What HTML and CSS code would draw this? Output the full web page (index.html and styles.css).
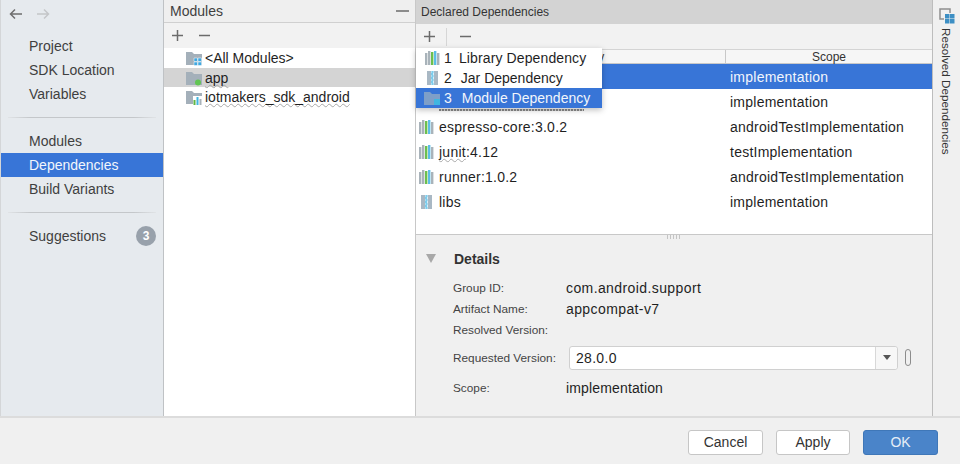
FILE: index.html
```html
<!DOCTYPE html>
<html lang="en">
<head>
<meta charset="utf-8">
<title>Project Structure</title>
<link rel="stylesheet" href="styles.css">
</head>
<body>
<svg class="defs" width="0" height="0" aria-hidden="true">
  <symbol id="folder" viewBox="0 0 16 16"><path d="M0 2h6l2 2h8v11H0z" fill="#a4b0ba"/></symbol>
  <symbol id="lib" viewBox="0 0 16 16">
    <rect x="1" y="3" width="2.400" height="12" fill="#a9b3ba"/><rect x="4" y="1" width="2.400" height="14" fill="#a9b3ba"/>
    <rect x="7" y="2" width="2.400" height="13" fill="#6cbf4e"/><rect x="10" y="1" width="2.400" height="14" fill="#5cbde6"/>
    <rect x="13" y="3" width="2.400" height="12" fill="#a9b3ba"/>
  </symbol>
  <symbol id="jar" viewBox="0 0 16 16">
    <rect x="3" y="1" width="11" height="14" fill="#a9b8c4"/>
    <rect x="7" y="1" width="3" height="14" fill="#d6eef9"/>
    <path d="M7.500 1h2v2h-2zM7 3h2v2H7zM7.500 5h2v2h-2zM7 7h2v2H7zM7.500 9h2v2h-2zM7 11h2v2H7zM7.500 13h2v2h-2z" fill="#7cccec"/>
  </symbol>
</svg>
<div class="window">
  <div class="main">
    <nav class="sidebar">
      <div class="history">
        <svg class="arrow" width="14" height="12" viewBox="0 0 14 12"><path d="M13 6H2M6 1.500L1.500 6L6 10.500" fill="none" stroke="#6e6e6e" stroke-width="1.500"/></svg>
        <svg class="arrow" width="14" height="12" viewBox="0 0 14 12"><path d="M1 6h11M8 1.500L12.500 6L8 10.500" fill="none" stroke="#c4c6c8" stroke-width="1.500"/></svg>
      </div>
      <div class="nav-group">
        <div class="nav-item">Project</div>
        <div class="nav-item">SDK Location</div>
        <div class="nav-item">Variables</div>
      </div>
      <div class="nav-sep"></div>
      <div class="nav-group">
        <div class="nav-item">Modules</div>
        <div class="nav-item active">Dependencies</div>
        <div class="nav-item">Build Variants</div>
      </div>
      <div class="nav-sep"></div>
      <div class="nav-group">
        <div class="nav-item suggestions">Suggestions<span class="badge">3</span></div>
      </div>
    </nav>

    <section class="modules">
      <header class="modules-head"><span>Modules</span><span class="dash"></span></header>
      <div class="toolbar modules-bar">
        <svg class="tool" width="13" height="13" viewBox="0 0 13 13"><path d="M6.500 1v11M1 6.500h11" stroke="#6b6b6b" stroke-width="1.500"/></svg>
        <svg class="tool" width="13" height="13" viewBox="0 0 13 13"><path d="M1 6.500h11" stroke="#6b6b6b" stroke-width="1.500"/></svg>
      </div>
      <div class="module-list">
        <div class="module">
          <svg class="ico" width="16" height="16" viewBox="0 0 16 16"><use href="#folder"/><path d="M8 8h3.500v3.500H8zM12 8h3.500v3.500H12zM8 12h3.500v3.500H8zM12 12h3.500v3.500H12z" fill="#40a8e0" stroke="#fff" stroke-width=".5"/></svg>
          <span>&lt;All Modules&gt;</span>
        </div>
        <div class="module selected">
          <svg class="ico" width="16" height="16" viewBox="0 0 16 16"><use href="#folder"/><circle cx="12" cy="12.500" r="3" fill="#62c554"/></svg>
          <span class="wavy">app</span>
        </div>
        <div class="module">
          <svg class="ico" width="16" height="16" viewBox="0 0 16 16"><use href="#folder"/><rect x="7" y="7" width="9" height="9" fill="#fff"/><rect x="7.500" y="11" width="2" height="5" fill="#62b543"/><rect x="10.500" y="8" width="2" height="8" fill="#40b6e0"/><rect x="13.500" y="10" width="2" height="6" fill="#a9b3ba"/></svg>
          <span class="wavy">iotmakers_sdk_android</span>
        </div>
      </div>
    </section>

    <section class="declared">
      <header class="declared-head">Declared Dependencies</header>
      <div class="toolbar declared-bar">
        <svg class="tool" width="13" height="13" viewBox="0 0 13 13"><path d="M6.500 1v11M1 6.500h11" stroke="#6b6b6b" stroke-width="1.500"/></svg>
        <span class="tool-sep"></span>
        <svg class="tool" width="13" height="13" viewBox="0 0 13 13"><path d="M1 6.500h11" stroke="#6b6b6b" stroke-width="1.500"/></svg>
      </div>
      <div class="table">
        <div class="row head"><div>Dependency</div><div>Scope</div></div>
        <div class="row selected-row"><div class="name"></div><div class="scope">implementation</div></div>
        <div class="row"><div class="name covered"><span class="squiggle"></span></div><div class="scope">implementation</div></div>
        <div class="row"><div class="name"><svg class="ico" width="16" height="16"><use href="#lib"/></svg><span>espresso-core:3.0.2</span></div><div class="scope">androidTestImplementation</div></div>
        <div class="row"><div class="name"><svg class="ico" width="16" height="16"><use href="#lib"/></svg><span><span class="wavy">junit</span>:4.12</span></div><div class="scope">testImplementation</div></div>
        <div class="row"><div class="name"><svg class="ico" width="16" height="16"><use href="#lib"/></svg><span>runner:1.0.2</span></div><div class="scope">androidTestImplementation</div></div>
        <div class="row"><div class="name"><svg class="ico" width="16" height="16"><use href="#jar"/></svg><span>libs</span></div><div class="scope">implementation</div></div>
      </div>
      <div class="details">
        <div class="grip"></div>
        <div class="details-title"><span class="triangle"></span><strong>Details</strong></div>
        <div class="field f-group"><label>Group ID:</label><span class="wide">com.android.support</span></div>
        <div class="field f-artifact"><label>Artifact Name:</label><span class="wide">appcompat-v7</span></div>
        <div class="field f-resolved"><label>Resolved Version:</label></div>
        <div class="field f-requested">
          <label>Requested Version:</label>
          <div class="combo"><span class="combo-value">28.0.0</span><span class="combo-arrow"><i></i></span></div>
          <span class="pill"></span>
        </div>
        <div class="field f-scope"><label>Scope:</label><span class="scope-value">implementation</span></div>
      </div>
      <div class="popup">
        <div class="popup-item n-lib"><svg class="ico" width="16" height="16"><use href="#lib"/></svg><span class="num n1">1</span>Library Dependency</div>
        <div class="popup-item"><svg class="ico" width="16" height="16"><use href="#jar"/></svg><span class="num">2</span>Jar Dependency</div>
        <div class="popup-item current"><svg class="ico" width="16" height="16" viewBox="0 0 16 16"><path d="M0 2h6l2 2h8v11H0z" fill="#7e9fc8"/><rect x="10" y="9" width="6" height="6" fill="#40b6e0"/></svg><span class="num n3">3</span>Module Dependency</div>
      </div>
    </section>

    <aside class="strip">
      <svg width="16" height="16" viewBox="0 0 16 16"><path d="M1 1h10v10H1z" fill="none" stroke="#8f8f8f" stroke-width="1.500"/><rect x="5" y="5" width="11" height="11" fill="#f0f0f0"/><path d="M6 6h4.500v4.500H6zM11 6h4.500v4.500H11zM6 11h4.500v4.500H6zM11 11h4.500v4.500H11z" fill="#3d8fc4"/></svg>
      <span class="strip-label">Resolved Dependencies</span>
    </aside>
  </div>
  <footer class="footer">
    <button class="btn">Cancel</button>
    <button class="btn apply">Apply</button>
    <button class="btn primary">OK</button>
  </footer>
</div>
</body>
</html>
```
FILE: styles.css
```css
* { box-sizing: border-box; }
html, body { margin: 0; height: 100%; overflow: hidden; }
body { font-family: "Liberation Sans", Arial, sans-serif; font-size: 14px; color: #1f1f1f; background: #f0f0f0; }
.defs { position: absolute; }
.window { width: 960px; height: 464px; display: flex; flex-direction: column; }
.main { height: 416px; display: flex; }
.ico { flex: none; }
.wavy { text-decoration: underline wavy #a8a8a8 1px; text-underline-offset: 1px; text-decoration-skip-ink: none; }

.sidebar { width: 164px; flex: none; background: #e6eaee; border-right: 1px solid #bfc2c5; border-left: 1px solid #d4d6d8; color: #3f3f3f; }
.history { height: 34px; display: flex; align-items: center; gap: 13px; padding: 0 0 6px 8px; }
.nav-group { display: flex; flex-direction: column; }
.nav-item { height: 24px; line-height: 24px; padding-left: 28px; }
.nav-item.active { background: #3875d7; color: #f2f6fc; }
.nav-sep { height: 1px; margin: 11px 7px 11px 7px; background: linear-gradient(90deg, #e0e3e6, #c4c7ca 15%, #c4c7ca 85%, #e0e3e6); }
.suggestions { display: flex; justify-content: space-between; align-items: center; padding-right: 7px; }
.badge { width: 20px; height: 20px; border-radius: 50%; background: #98a1ab; color: #fff; font-size: 12px; font-weight: 700; line-height: 20px; text-align: center; }

.modules { width: 252px; flex: none; display: flex; flex-direction: column; background: #fff; border-right: 1px solid #c8c8c8; }
.modules-head { height: 23px; flex: none; display: flex; align-items: center; justify-content: space-between; padding: 0 6px 0 6px; background: #efefef; border-bottom: 1px solid #d0d0d0; color: #3f3f3f; }
.dash { width: 13px; height: 2px; background: #8c8c8c; }
.toolbar { flex: none; display: flex; align-items: center; background: #f2f2f2; }
.modules-bar { height: 25px; gap: 14px; padding-left: 7px; }
.module-list { flex: 1; }
.module { height: 20px; display: flex; align-items: center; gap: 3px; padding-left: 22px; }
.module.selected { height: 19px; background: #d4d4d4; }

.declared { flex: 1; min-width: 0; position: relative; display: flex; flex-direction: column; background: #f0f0f0; border-right: 1px solid #bdbdbd; }
.declared-head { height: 24px; flex: none; display: flex; align-items: center; padding-left: 5px; background: #d3d3d3; font-size: 12px; color: #333; }
.declared-bar { height: 26px; padding-left: 7px; border-bottom: 1px solid #d4d4d4; }
.tool-sep { width: 1px; height: 18px; margin: 0 12px 0 10px; background: #d6d6d6; }
.table { height: 185px; flex: none; background: #fff; border-bottom: 1px solid #c8c8c8; }
.row { display: grid; grid-template-columns: 309px 1fr; height: 25px; align-items: center; letter-spacing: .24px; }
.row.head { height: 14px; background: #f6f6f6; border-bottom: 1px solid #c8c8c8; font-size: 12px; letter-spacing: 0; text-align: center; color: #333; }
.row.head > div + div { border-left: 1px solid #c8c8c8; height: 100%; line-height: 14px; }
.row.selected-row { background: #3875d7; color: #f2f6fc; }
.name { display: flex; align-items: center; gap: 5px; padding-left: 2px; }
.name.covered { align-self: stretch; align-items: flex-start; padding-left: 23px; }
.squiggle { width: 145px; height: 2px; margin-top: 20px; background: repeating-linear-gradient(90deg, #8a8a8a 0 2px, #d8d8d8 2px 3px); }
.scope { padding-left: 5px; }

.details { flex: 1; position: relative; display: flex; flex-direction: column; padding: 0 0 0 37px; }
.grip { position: absolute; top: 0; left: 251px; width: 15px; height: 4px; background: repeating-linear-gradient(90deg, #c4c4c4 0 1px, transparent 1px 3px); }
.details-title { height: 42px; padding: 5px 0 0 1px; display: flex; align-items: center; }
.details-title strong { font-size: 14px; color: #333; }
.triangle { position: absolute; left: 10px; top: 19px; width: 0; height: 0; border-left: 5px solid transparent; border-right: 5px solid transparent; border-top: 9px solid #a8a8a8; }
.field { display: flex; align-items: center; height: 21px; }
.field label { width: 113px; flex: none; font-size: 11.800px; color: #444; }
.wide { letter-spacing: .4px; }
.scope-value { letter-spacing: .15px; }
.f-requested { height: 35px; }
.f-scope { height: 25px; }
.combo { width: 329px; height: 24px; margin-left: 3px; display: flex; background: #fff; border: 1px solid #d0d0d0; border-radius: 3px; }
.combo-value { flex: 1; padding-left: 6px; line-height: 22px; letter-spacing: .3px; }
.combo-arrow { width: 22px; display: flex; align-items: center; justify-content: center; background: #f7f7f7; border-left: 1px solid #d8d8d8; border-radius: 0 3px 3px 0; }
.combo-arrow i { width: 0; height: 0; border-left: 4px solid transparent; border-right: 4px solid transparent; border-top: 5px solid #555; }
.pill { width: 6px; height: 17px; margin-left: 7px; border: 1px solid #8c8c8c; border-radius: 3px; }

.popup { position: absolute; left: 0; top: 48px; width: 186px; height: 60px; background: #fff; box-shadow: 0 2px 6px rgba(0,0,0,.25); }
.popup-item { height: 20px; display: flex; align-items: center; padding-left: 8px; }
.popup-item.n-lib { letter-spacing: .12px; }
.popup-item .num { margin: 0 9px 0 4px; }
.popup-item .n1 { margin-right: 7px; }
.popup-item .n3 { margin-right: 10px; }
.popup-item.current { background: #3875d7; color: #f2f6fc; }

.strip { width: 27px; flex: none; display: flex; flex-direction: column; align-items: center; padding-top: 8px; background: #f0f0f0; }
.strip-label { writing-mode: vertical-rl; font-size: 11.700px; margin-top: 4px; color: #333; }

.footer { height: 48px; flex: none; display: flex; justify-content: flex-end; align-items: center; gap: 13px; padding: 2px 22px 0 0; background: #f0f0f0; border-top: 2px solid #dcdcdc; }
.btn { width: 75px; height: 25px; padding: 0; font: 14px "Liberation Sans", Arial, sans-serif; color: #333; background: #fff; border: 1px solid #c6c6c6; border-radius: 3px; }
.btn.apply { width: 74px; }
.btn.primary { background: #4a84c9; border-color: #3f77b8; color: #e6eef7; }
```
